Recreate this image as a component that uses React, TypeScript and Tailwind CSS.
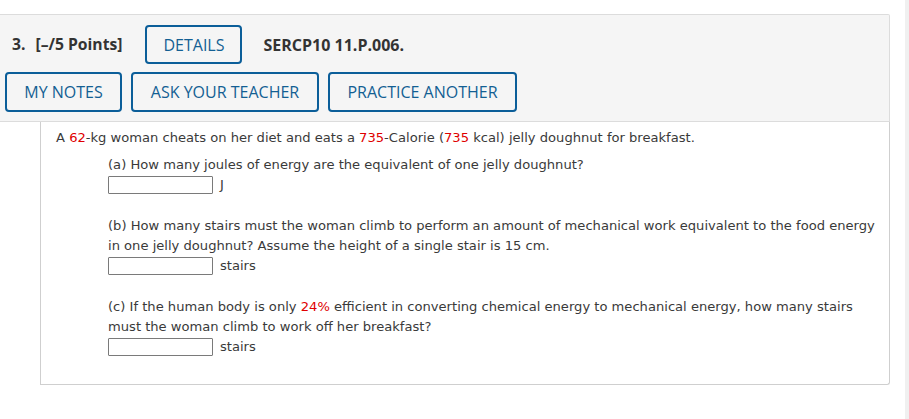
import React from "react";

const btn =
  "h-full flex items-center justify-center border-2 border-[#0b5e99] rounded-[4px] text-[#135f93] text-[16px] font-['Open_Sans',sans-serif] bg-[#f5f5f5]";

function Field({ unit }: { unit: string }) {
  return (
    <div className="flex items-center h-[20px]">
      <div className="w-[105px] h-[18px] border border-[#7a7a7a] bg-white rounded-[1px]" />
      <span className="ml-[7px]">{unit}</span>
    </div>
  );
}

export default function App() {
  return (
    <div className="relative w-full h-[419px] bg-white overflow-hidden">
      <div className="absolute right-0 top-0 w-[4px] h-full bg-[#f0f0f0]" />
      <div className="pt-[14px] w-[890px]">
        <div className="h-[108px] border-t border-r border-b border-[#dcdcdc] bg-[#f5f5f5] rounded-tr-[2px]">
          <div className="flex items-center h-[39px] mt-[10px] font-['Open_Sans',sans-serif] text-[#333]">
            <span className="ml-[12px] text-[15.7px] font-bold">3.</span>
            <span className="ml-[10px] text-[15.7px] font-bold">[–/5 Points]</span>
            <div className={btn + " ml-[23px] w-[97px]"}>DETAILS</div>
            <span className="ml-[21px] text-[16px] font-bold">SERCP10 11.P.006.</span>
          </div>
          <div className="flex h-[40px] mt-[8px] ml-[5px] gap-[9px]">
            <div className={btn + " w-[117px]"}>MY NOTES</div>
            <div className={btn + " w-[188px]"}>ASK YOUR TEACHER</div>
            <div className={btn + " w-[189px]"}>PRACTICE ANOTHER</div>
          </div>
        </div>
        <div className="ml-[40px] h-[263px] border-l border-r border-b border-[#cfcfcf] rounded-br-[3px] font-['DejaVu_Sans',Verdana,sans-serif] text-[13.1px] leading-[20px] text-[#3a3a3a]">
          <div className="pl-[15px] pt-[6px]">
            A <span className="text-[#e00000]">62</span>-kg woman cheats on her diet and eats a{" "}
            <span className="text-[#e00000]">735</span>-Calorie (<span className="text-[#e00000]">735</span> kcal) jelly
            doughnut for breakfast.
          </div>
          <div className="pl-[67px] pr-[10px] pt-[7px]">
            <div>(a) How many joules of energy are the equivalent of one jelly doughnut?</div>
            <Field unit="J" />
            <div className="mt-[21px]">
              (b) How many stairs must the woman climb to perform an amount of mechanical work equivalent to the food
              energy in one jelly doughnut? Assume the height of a single stair is 15 cm.
            </div>
            <Field unit="stairs" />
            <div className="mt-[21px]">
              (c) If the human body is only <span className="text-[#e00000]">24%</span> efficient in converting chemical
              energy to mechanical energy, how many stairs must the woman climb to work off her breakfast?
            </div>
            <Field unit="stairs" />
          </div>
        </div>
      </div>
    </div>
  );
}
